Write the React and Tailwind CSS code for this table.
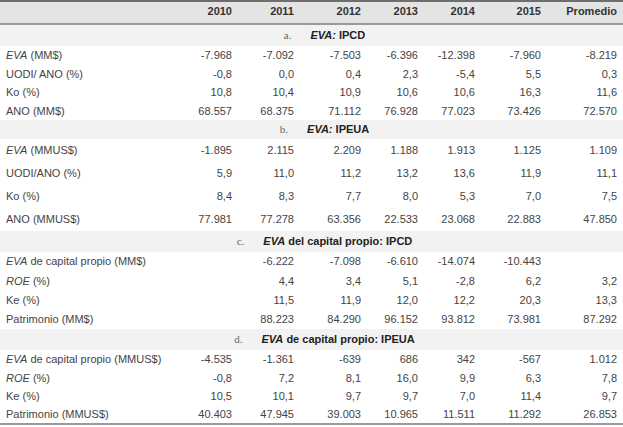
import React from "react";

const years = ["2010", "2011", "2012", "2013", "2014", "2015", "Promedio"];

const sections = [
  {
    num: "a.",
    title: [<i key="e">EVA:</i>, " IPCD"],
    rowH: "h-[18.5px]",
    secH: "h-[22px]",
    rows: [
      [[<i key="e">EVA</i>, " (MM$)"], "-7.968", "-7.092", "-7.503", "-6.396", "-12.398", "-7.960", "-8.219"],
      ["UODI/ ANO (%)", "-0,8", "0,0", "0,4", "2,3", "-5,4", "5,5", "0,3"],
      ["Ko (%)", "10,8", "10,4", "10,9", "10,6", "10,6", "16,3", "11,6"],
      ["ANO (MM$)", "68.557", "68.375", "71.112", "76.928", "77.023", "73.426", "72.570"],
    ],
  },
  {
    num: "b.",
    title: [<i key="e">EVA:</i>, " IPEUA"],
    rowH: "h-[23px]",
    secH: "h-[19px]",
    rows: [
      [[<i key="e">EVA</i>, " (MMUS$)"], "-1.895", "2.115", "2.209", "1.188", "1.913", "1.125", "1.109"],
      ["UODI/ANO (%)", "5,9", "11,0", "11,2", "13,2", "13,6", "11,9", "11,1"],
      ["Ko (%)", "8,4", "8,3", "7,7", "8,0", "5,3", "7,0", "7,5"],
      ["ANO (MMUS$)", "77.981", "77.278", "63.356", "22.533", "23.068", "22.883", "47.850"],
    ],
  },
  {
    num: "c.",
    title: [<i key="e">EVA</i>, " del capital propio: IPCD"],
    rowH: "h-[19.25px]",
    secH: "h-[21px]",
    rows: [
      [[<i key="e">EVA</i>, " de capital propio (MM$)"], "", "-6.222", "-7.098", "-6.610", "-14.074", "-10.443", ""],
      [[<i key="e">ROE</i>, " (%)"], "", "4,4", "3,4", "5,1", "-2,8", "6,2", "3,2"],
      ["Ke (%)", "", "11,5", "11,9", "12,0", "12,2", "20,3", "13,3"],
      ["Patrimonio (MM$)", "", "88.223", "84.290", "96.152", "93.812", "73.981", "87.292"],
    ],
  },
  {
    num: "d.",
    title: [<i key="e">EVA</i>, " de capital propio: IPEUA"],
    rowH: "h-[18.5px]",
    secH: "h-[21px]",
    rows: [
      [[<i key="e">EVA</i>, " de capital propio (MMUS$)"], "-4.535", "-1.361", "-639", "686", "342", "-567", "1.012"],
      [[<i key="e">ROE</i>, " (%)"], "-0,8", "7,2", "8,1", "16,0", "9,9", "6,3", "7,8"],
      ["Ke (%)", "10,5", "10,1", "9,7", "9,7", "7,0", "11,4", "9,7"],
      ["Patrimonio (MMUS$)", "40.403", "47.945", "39.003", "10.965", "11.511", "11.292", "26.853"],
    ],
  },
];

const colW = ["w-[175px]", "w-[63px]", "w-[62px]", "w-[67px]", "w-[57px]", "w-[57px]", "w-[66px]", "w-[76px]"];

export default function App() {
  return (
    <div className="w-[623px] h-[427px] bg-white font-['Liberation_Sans',Arial,sans-serif] text-[11px] text-[#444]">
      <table className="w-[623px] border-collapse table-fixed">
        <colgroup>
          {colW.map((w, i) => (
            <col key={i} className={w} />
          ))}
        </colgroup>
        <thead>
          <tr className="h-[23px] bg-[#e4e4e4] border-t-2 border-t-[#6e6e6e] border-b-2 border-b-[#9a9a9a]">
            <th className="p-0"></th>
            {years.map((y) => (
              <th key={y} className="p-0 pr-[6px] pb-[2px] text-right font-bold text-[#333]">{y}</th>
            ))}
          </tr>
        </thead>
        <tbody>
          {sections.map((s) => (
            <React.Fragment key={s.num}>
              <tr className={`${s.secH} bg-[#f2f2f2]`}>
                <td colSpan={8} className="p-0">
                  <div className="flex items-center justify-center pl-[26px] gap-[19px]">
                    <span className="font-['Liberation_Serif',serif] text-[11px] text-[#666]">{s.num}</span>
                    <span className="font-bold text-[#222]">{s.title}</span>
                  </div>
                </td>
              </tr>
              {s.rows.map((r, ri) => (
                <tr key={ri} className={`${s.rowH} bg-white`}>
                  <td className="p-0 pl-[6px] text-left whitespace-nowrap">{r[0]}</td>
                  {r.slice(1).map((v, vi) => (
                    <td key={vi} className="p-0 pr-[6px] text-right">{v}</td>
                  ))}
                </tr>
              ))}
            </React.Fragment>
          ))}
        </tbody>
        <tfoot>
          <tr className="border-t-2 border-t-[#9a9a9a]">
            <td colSpan={8} className="p-0"></td>
          </tr>
        </tfoot>
      </table>
    </div>
  );
}
